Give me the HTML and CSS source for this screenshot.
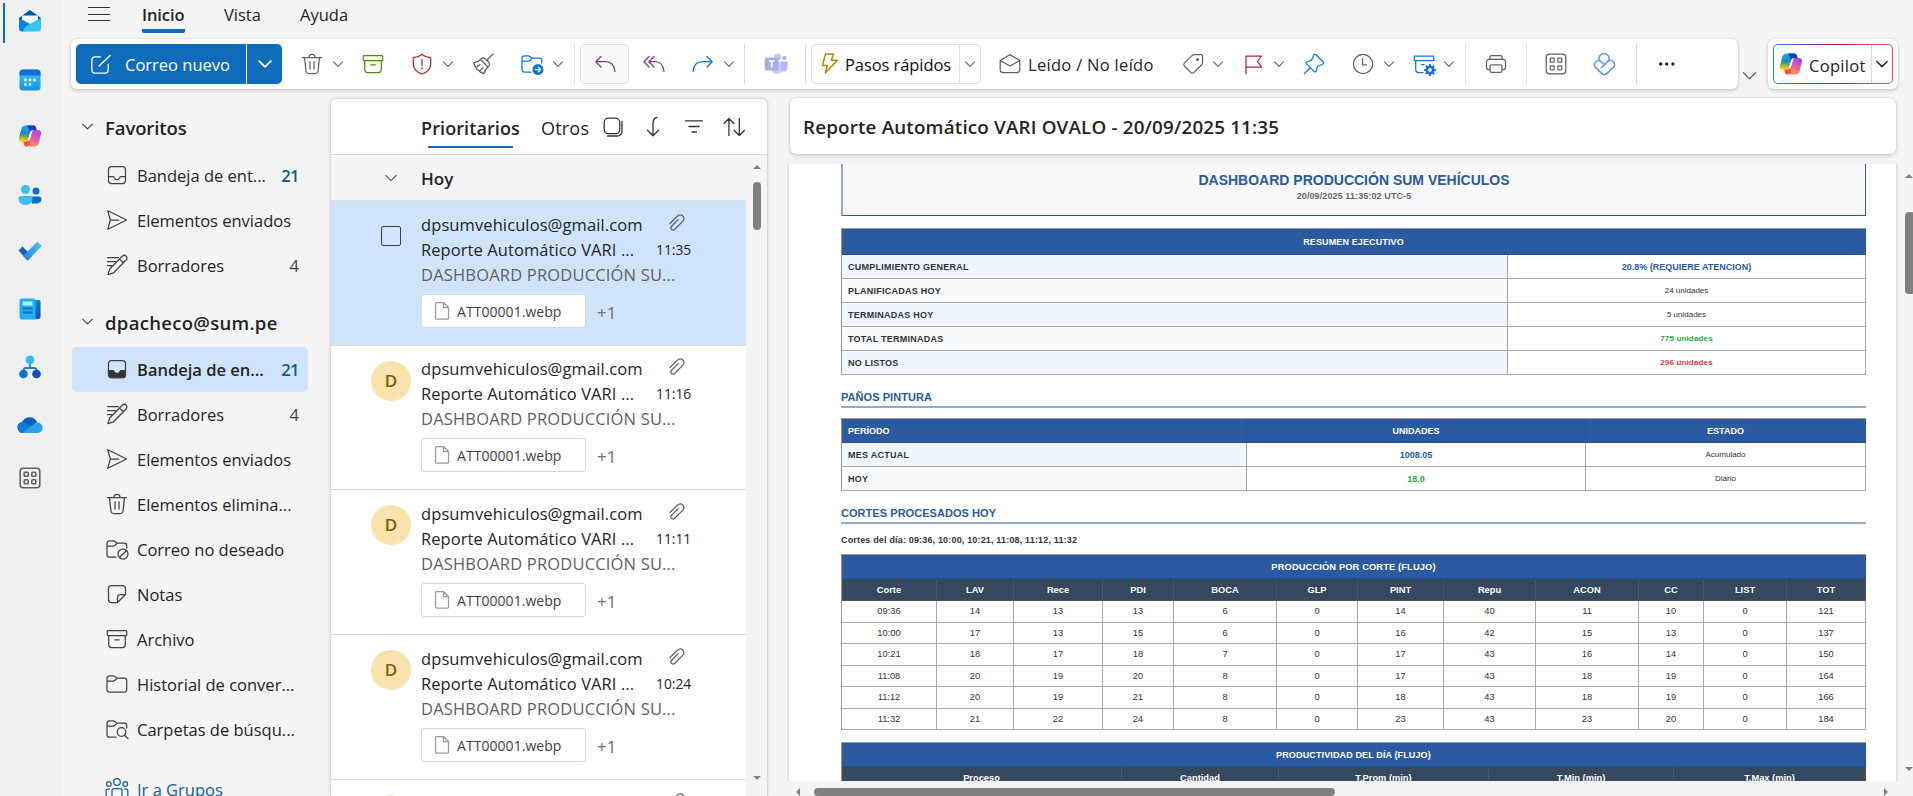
FILE: index.html
```html
<!DOCTYPE html>
<html lang="es">
<head>
<meta charset="utf-8">
<title>Correo - Outlook</title>
<link rel="stylesheet" href="styles.css">
</head>
<body>
<svg class="defs" width="0" height="0" aria-hidden="true">
  <defs>
    <linearGradient id="gA" x1="0.3" y1="0" x2="0.2" y2="1"><stop offset="0.1" stop-color="#1aa4e8"/><stop offset="0.45" stop-color="#1a86c8"/><stop offset="0.65" stop-color="#5cab55"/><stop offset="0.9" stop-color="#f5c518"/></linearGradient>
    <linearGradient id="gB" x1="0.7" y1="0" x2="0.3" y2="1"><stop offset="0" stop-color="#a44ae6"/><stop offset="0.5" stop-color="#e85aa0"/><stop offset="1" stop-color="#ffa05a"/></linearGradient>
    <linearGradient id="gC" x1="0" y1="0" x2="0" y2="1"><stop offset="0" stop-color="#45c8fa"/><stop offset="1" stop-color="#0a93ea"/></linearGradient>
    <linearGradient id="gD" x1="0" y1="0" x2="1" y2="1"><stop offset="0" stop-color="#1a8ae0"/><stop offset="1" stop-color="#0a4fa8"/></linearGradient>
    <linearGradient id="gE" x1="0" y1="1" x2="1" y2="0"><stop offset="0" stop-color="#1b7fe0"/><stop offset="1" stop-color="#55c4f7"/></linearGradient>
  </defs>
  <symbol id="chev" viewBox="0 0 14 14"><path d="M2.500 4.800 7 9.300l4.500-4.500"/></symbol>
  <symbol id="trash" viewBox="0 0 24 24"><path d="M2.500 5.500h19M9 5.300a3 3 0 0 1 6 0M4.500 5.500l1.500 14a2.400 2.400 0 0 0 2.300 2h7.400a2.400 2.400 0 0 0 2.300-2l1.500-14M10 9.500v7.500M14 9.500v7.500"/></symbol>
  <symbol id="archive" viewBox="0 0 24 24"><path d="M3 3.500h18a.7.7 0 0 1 .7.7v3.600a.7.7 0 0 1-.7.7H3a.7.7 0 0 1-.7-.7V4.200a.7.7 0 0 1 .7-.7ZM3.700 8.500v9a3 3 0 0 0 3 3h10.600a3 3 0 0 0 3-3v-9M9.800 12.800h4.400"/></symbol>
  <symbol id="shield" viewBox="0 0 24 24"><path d="M12 2.500c2.500 2 5.300 3 8.700 3.200v6c0 5-3 8.300-8.700 10.300-5.700-2-8.700-5.300-8.700-10.300v-6c3.400-.2 6.200-1.200 8.700-3.200ZM12 7.500v6M12 15.500v1.500"/></symbol>
  <symbol id="broom" viewBox="0 0 24 24"><path d="M22 2l-6.500 6.500M9.500 7.500l7.500 7.500c1.600-1.600 2-3.600.4-5.200l-2.700-2.700c-1.600-1.600-3.600-1.200-5.200.4ZM9.500 7.500C7.800 9.500 5.500 10.500 2.500 10.800c1.500 4.700 5 9 10.300 10.900.8-2.500 2-4.700 4.200-6.700M6 14.500l3-2M9 18.500l3-2.500"/></symbol>
  <symbol id="folder" viewBox="0 0 24 24"><path d="M2 8.500V6.300a2.500 2.500 0 0 1 2.500-2.500h3.700c.7 0 1.200.3 1.700.7l2 1.700h7.300A2.500 2.500 0 0 1 21.700 8.700v9a2.500 2.500 0 0 1-2.500 2.500H4.500A2.500 2.500 0 0 1 2 17.700ZM2 9h6.200c.7 0 1.200-.3 1.700-.7l2-1.700"/></symbol>
  <symbol id="foldercut" viewBox="0 0 24 24"><path d="M21.700 11V8.700a2.500 2.500 0 0 0-2.500-2.500h-7.300l-2-1.700c-.5-.4-1-.7-1.700-.7H4.500A2.500 2.500 0 0 0 2 6.300v11.400a2.500 2.500 0 0 0 2.500 2.500H11M2 9h6.200c.7 0 1.200-.3 1.700-.7l2-1.700"/></symbol>
  <symbol id="apps" viewBox="0 0 24 24"><rect x="2.200" y="2.200" width="19.600" height="19.600" rx="3"/><rect x="6.200" y="6.200" width="4" height="4" rx=".8"/><rect x="13.800" y="6.200" width="4" height="4" rx=".8"/><rect x="6.200" y="13.800" width="4" height="4" rx=".8"/><rect x="13.800" y="13.800" width="4" height="4" rx=".8"/></symbol>
  <symbol id="inbox" viewBox="0 0 24 24"><rect x="3.500" y="3.500" width="17" height="17" rx="3"/><path d="M3.500 13.500h4.700c.5 0 .8.4.9.9.5 1.600 1.500 2.300 2.900 2.300s2.400-.7 2.900-2.300c.1-.5.4-.9.9-.9h4.700"/></symbol>
  <symbol id="send" viewBox="0 0 24 24"><path d="M2.800 2.800 21.600 12 2.800 21.300 5.300 12ZM5.300 12h8.500"/></symbol>
  <symbol id="draft" viewBox="0 0 24 24"><path d="M2.500 4.500h11M2.500 8.500h8M2.500 12.500h4.500M15.500 5l2-2a2.700 2.700 0 0 1 3.800 3.800L8.500 19.800l-5.600 1.800 1.800-5.600ZM14.500 6l3.800 3.800"/></symbol>
  <symbol id="clip" viewBox="0 0 20 20"><path d="M3 10.500 10.300 3.300c1.700-1.700 4-1.800 5.500-.3s1.400 3.700-.2 5.400l-7.800 7.800c-1 1-2.400 1.100-3.300.2s-.9-2.200.1-3.200l6.600-6.600"/></symbol>
  <symbol id="file" viewBox="0 0 20 20"><path d="M5 1.500h6.500l5 5v10.500a1 1 0 0 1-1 1H4.500a1 1 0 0 1-1-1v-14.500a1 1 0 0 1 1-1ZM11.500 1.500v5h5"/></symbol>
  <symbol id="copilot" viewBox="0 0 24 24"><path d="M15.500 1.500c1.400 0 2 .8 2.400 2l.7 2.500h-3.300c-1.800 0-2.700 1-3.200 2.800l-1.700 6c-.6 1.900-1.300 2.900-3.400 2.900H4C1.500 17.700.4 16 1 13.600L3.300 5.100c.7-2.500 2-3.600 4.500-3.600Z" fill="url(#gA)"/><path d="M9 1.500h6.500c1.400 0 2 .8 2.400 2l.7 2.500h-3.300c-1.500 0-2.400.6-3 2Z" fill="#1240b8"/><path d="M8.500 22.500c-1.400 0-2-.8-2.400-2l-.8-2.800h2.200c2 0 2.900-1 3.400-2.800l1.600-5.800c.6-2 1.400-3.100 3.500-3.100h4c2.500 0 3.600 1.700 3 4.100L20.700 19c-.7 2.400-2 3.500-4.500 3.500Z" fill="url(#gB)"/><path d="M8.500 22.500c-1.400 0-2-.8-2.400-2l-.8-2.800h2.200c1.600 0 2.500-.7 3-1.900l2 4.700Z" fill="#f0523a"/><path d="M14.800 6.300c-1.600.2-2.300 1.100-2.800 2.700L9.800 16.800c1.400-.3 2-1.200 2.400-2.600l1.900-6.300c.2-.7.400-1.200.7-1.600Z" fill="#fff"/></symbol>
</svg>

<div class="app">
  <nav class="rail">
    <svg viewBox="0 0 24 24"><path d="M1 9 12 1l11 8v10H1Z" fill="#0b55a8"/><path d="M4 6.500h16v9H4Z" fill="#f2f8fe"/><path d="M1 9l11 6-5 7.500H4a3 3 0 0 1-3-3Z" fill="#0f7fdc"/><path d="M23 9v10.500a3 3 0 0 1-3 3H5c1-4 3-6 7-7.500Z" fill="#35c5f6"/></svg>
    <svg viewBox="0 0 24 24"><rect x="1.500" y="1.500" width="21" height="21" rx="3.500" fill="url(#gC)"/><path d="M1.500 7.500V5A3.500 3.500 0 0 1 5 1.500h14A3.500 3.500 0 0 1 22.500 5v2.500Z" fill="#0f6fd0"/><g fill="#fff"><circle cx="7.500" cy="12" r="1.400"/><circle cx="12" cy="12" r="1.400"/><circle cx="16.500" cy="12" r="1.400"/><circle cx="7.500" cy="16.500" r="1.400"/><circle cx="12" cy="16.500" r="1.400"/></g></svg>
    <svg viewBox="0 0 24 24"><use href="#copilot"/></svg>
    <svg viewBox="0 0 24 24"><circle cx="18" cy="8" r="3.500" fill="#0b6fce"/><path d="M12 13.500h9a2.500 2.500 0 0 1 2.500 2.500c0 3-2.500 4.500-5.500 4.500h-4Z" fill="#0b6fce"/><circle cx="7.500" cy="6.500" r="4.500" fill="#3dbcf8"/><path d="M3 13h9a2.500 2.500 0 0 1 2.500 2.500c0 4-3 6.500-7 6.500s-7-2.500-7-6.500A2.500 2.500 0 0 1 3 13Z" fill="#3dbcf8"/></svg>
    <svg viewBox="0 0 24 24"><path d="M.5 11.500 4.500 7.500l9.500 9.500-4.500 4.500Z" fill="#1b5cc0"/><path d="M5 17 19.500 2.500 23.800 7 9.500 21.500Z" fill="url(#gE)"/></svg>
    <svg viewBox="0 0 24 24"><path d="M15 3h5.500a2 2 0 0 1 2 2v14.500a2.500 2.500 0 0 1-2.500 2.500h-5Z" fill="url(#gD)"/><path d="M3.500 1.500h12a2 2 0 0 1 2 2v17a2 2 0 0 0 2 2H4A2.500 2.500 0 0 1 1.500 20V3.500a2 2 0 0 1 2-2Z" fill="#1fb0f5"/><path d="M4.500 4.500h10v4h-10Z" fill="#b9ecfd"/><path d="M4.500 11.500h10M4.500 15.500h10" stroke="#0a6fc8" stroke-width="1.800"/></svg>
    <svg viewBox="0 0 24 24"><path d="M12 8v5M5.500 17v-1.500a2.500 2.500 0 0 1 2.500-2.500h8a2.500 2.500 0 0 1 2.500 2.500V17" fill="none" stroke="#1a80dc" stroke-width="1.800"/><circle cx="12" cy="4.800" r="4.400" fill="#35bdf8"/><circle cx="5.500" cy="19" r="4.300" fill="#0b6fd8"/><circle cx="18.500" cy="19" r="4.300" fill="#0b50c0"/></svg>
    <svg class="cloud" viewBox="0 0 26 18"><path d="M6 17a5.500 5.500 0 0 1-.8-10.900A8 8 0 0 1 20 6.200L13 13Z" fill="#0a5fb8"/><path d="M6 17A5.600 5.600 0 1 1 9.500 7l9 6Z" fill="#1178d4"/><path d="M5 16.700 18 7.200A5.200 5.200 0 1 1 20 17H6Z" fill="#28a0ea"/></svg>
    <svg class="line rail-apps" viewBox="0 0 24 24"><use href="#apps"/></svg>
  </nav>
  <div class="rail-active"></div>

  <div class="main">
    <header class="tabs">
      <svg class="burger" viewBox="0 0 22 16"><path d="M0 1.500h22M0 8.500h22M0 14.500h22"/></svg>
      <span class="tab tab-on">Inicio</span>
      <span class="tab tab-vista">Vista</span>
      <span class="tab tab-ayuda">Ayuda</span>
    </header>

    <div class="bar">
      <div class="ribbon">
        <div class="new"><span class="new-main"><svg class="line" viewBox="0 0 24 24"><path d="M12 4H6.500A3.500 3.500 0 0 0 3 7.500v10A3.500 3.500 0 0 0 6.500 21h10a3.500 3.500 0 0 0 3.500-3.500V12M10.500 13.500 22 2.500"/></svg><b>Correo nuevo</b></span><span class="new-drop"><svg class="line" viewBox="0 0 14 14"><use href="#chev"/></svg></span></div>
        <svg class="ic line" viewBox="0 0 24 24"><use href="#trash"/></svg>
        <svg class="ch line" viewBox="0 0 14 14"><use href="#chev"/></svg>
        <svg class="ic line green" viewBox="0 0 24 24"><use href="#archive"/></svg>
        <svg class="ic line red" viewBox="0 0 24 24"><use href="#shield"/></svg>
        <svg class="ch line" viewBox="0 0 14 14"><use href="#chev"/></svg>
        <svg class="ic line" viewBox="0 0 24 24"><use href="#broom"/></svg>
        <svg class="ic line blue" viewBox="0 0 24 24"><use href="#foldercut"/><circle cx="18" cy="17.500" r="5.500" fill="#0f78d4" stroke="none"/><path d="M15.300 17.500h5.200M18.500 15.300l2.200 2.200-2.200 2.200" stroke="#fff"/></svg>
        <svg class="ch line" viewBox="0 0 14 14"><use href="#chev"/></svg>
        <i class="sep"></i>
        <span class="reply"><svg class="ic line purple" viewBox="0 0 24 24"><path d="M8 4.500 2.800 9.700 8 15M2.800 9.700h9.500c5.500 0 9 3.500 9.700 9.800"/></svg></span>
        <svg class="ic line purple" viewBox="0 0 24 24"><path d="M7 4.500 2 9.700 7 15M12 4.500 6.800 9.700 12 15M6.800 9.700h6c5 0 8.700 3.500 9.200 9.800"/></svg>
        <svg class="ic line blue" viewBox="0 0 24 24"><path d="M16 4.500l5.200 5.200L16 15M21.200 9.700h-9.500c-5.500 0-9 3.500-9.700 9.800"/></svg>
        <svg class="ch line" viewBox="0 0 14 14"><use href="#chev"/></svg>
        <i class="sep"></i>
        <svg class="ic" viewBox="0 0 24 24"><circle cx="13.500" cy="5" r="3.500" fill="#c3c6ef"/><circle cx="20.300" cy="6" r="2.300" fill="#b4b8ea"/><path d="M7 9.500h12v6.500a6 6 0 0 1-12 0Z" fill="#c9ccf3"/><path d="M17 9.500h6.500v6a4 4 0 0 1-6 3.500Z" fill="#b4b8ea"/><rect x=".8" y="5.500" width="13.500" height="13" rx="1.500" fill="#a9aee0"/><path d="M4.800 9h5.800M7.700 9v6.500" stroke="#fff" stroke-width="1.700"/></svg>
        <i class="sep"></i>
        <div class="quick"><svg class="ic line gold" viewBox="0 0 24 24"><path d="M8.500 2h8l-2.200 6.200h6L8.500 20.800l1.700-7.300H5.500Z" transform="translate(-1 0)"/></svg><span class="quick-label">Pasos rápidos</span><span class="quick-drop"><svg class="ch line" viewBox="0 0 14 14"><use href="#chev"/></svg></span></div>
        <div class="read"><svg class="ic line" viewBox="0 0 24 24"><path d="M2.200 8.500 12 2.600l9.800 5.900v9a3 3 0 0 1-3 3H5.200a3 3 0 0 1-3-3ZM2.500 8.700 12 14l9.500-5.300"/></svg><span>Leído / No leído</span></div>
        <svg class="ic line" viewBox="0 0 24 24"><path d="M13.500 2.700h6.500a1.500 1.500 0 0 1 1.500 1.500v6.500c0 .8-.3 1.400-.8 2l-7.600 7.700a2.300 2.300 0 0 1-3.300 0l-6.200-6.200a2.300 2.300 0 0 1 0-3.300l7.700-7.500c.6-.5 1.300-.7 2.200-.7Z"/><circle cx="16.600" cy="7.600" r="1.500" class="dot"/></svg>
        <svg class="ch line" viewBox="0 0 14 14"><use href="#chev"/></svg>
        <svg class="ic line red" viewBox="0 0 24 24"><path d="M4 21.500V4h15.500l-4 5.500 4 5.700H4"/></svg>
        <svg class="ch line" viewBox="0 0 14 14"><use href="#chev"/></svg>
        <svg class="ic line blue" viewBox="0 0 24 24"><path d="M14 2.800l7.300 7.200c.8.800.3 1.600-.5 2l-5.300 2.500-1.600 4.700c-.3.800-1 1-1.600.4l-8-8c-.6-.6-.4-1.300.4-1.600L9.400 8.400 12 3.200c.4-.8 1.200-1.200 2-.4ZM8.300 15.700l-5.800 5.800"/></svg>
        <svg class="ic line" viewBox="0 0 24 24"><circle cx="12" cy="12" r="9.600"/><path d="M11.500 6.500v6.300h4"/></svg>
        <svg class="ch line" viewBox="0 0 14 14"><use href="#chev"/></svg>
        <svg class="ic line blue" viewBox="0 0 24 24"><path d="M21.700 8.200V4.200H2.300v4.300h19.400ZM3.700 8.500v9a3 3 0 0 0 3 3H11M9.500 12.500H12"/><circle cx="18" cy="18" r="3.200" fill="none" stroke-width="2.600"/><path d="M18 12.800v2M18 21.200v2M12.800 18h2M21.200 18h2M14.400 14.400l1.400 1.400M20.200 20.200l1.400 1.400M14.400 21.600l1.400-1.400M20.200 15.800l1.400-1.400" stroke-width="2"/></svg>
        <svg class="ch line" viewBox="0 0 14 14"><use href="#chev"/></svg>
        <i class="sep"></i>
        <svg class="ic line" viewBox="0 0 24 24"><path d="M6 7.300V5a1.500 1.500 0 0 1 1.500-1.500h9A1.500 1.500 0 0 1 18 5v2.300M6 17.500H4.500a2 2 0 0 1-2-2V10a2.700 2.700 0 0 1 2.700-2.700h13.600a2.700 2.700 0 0 1 2.700 2.700v5.500a2 2 0 0 1-2 2H18M7.500 12.800h9A1.500 1.500 0 0 1 18 14.300v4.500a1.500 1.500 0 0 1-1.500 1.500h-9A1.500 1.500 0 0 1 6 18.800v-4.500a1.500 1.500 0 0 1 1.500-1.500Z"/></svg>
        <i class="sep"></i>
        <svg class="ic line" viewBox="0 0 24 24"><use href="#apps"/></svg>
        <svg class="ic line sky" viewBox="0 0 24 24"><path d="M7.500 8.500a5 5 0 1 1 9 .2M16.500 8.700 9.500 15.500M12 12.300 9.200 9.800a4 4 0 0 0-5.700.2 3.900 3.900 0 0 0 .2 5.600l6 5.800a4 4 0 0 0 5.500 0l6.200-6.200a4 4 0 0 0-5.500-5.800"/></svg>
        <i class="sep"></i>
        <svg class="ic more" viewBox="0 0 24 24"><circle cx="5.700" cy="12" r="1.700"/><circle cx="11.700" cy="12" r="1.700"/><circle cx="17.900" cy="12" r="1.700"/></svg>
      </div>
      <svg class="line expand" viewBox="0 0 14 14"><path d="M1.200 4.300 7 10l5.800-5.700"/></svg>
      <div class="cop-card"><div class="cop"><svg class="cop-logo" viewBox="0 0 24 24"><use href="#copilot"/></svg><span class="cop-label">Copilot</span><span class="cop-drop"><svg class="line" viewBox="0 0 14 14"><use href="#chev"/></svg></span></div></div>
    </div>

    <div class="panes">
      <aside class="folders">
        <div class="group"><svg class="line" viewBox="0 0 14 14"><use href="#chev"/></svg><span>Favoritos</span></div>
        <div class="f"><svg class="line" viewBox="0 0 24 24"><use href="#inbox"/></svg><span>Bandeja de ent...</span><em class="n-on">21</em></div>
        <div class="f"><svg class="line" viewBox="0 0 24 24"><use href="#send"/></svg><span>Elementos enviados</span></div>
        <div class="f"><svg class="line" viewBox="0 0 24 24"><use href="#draft"/></svg><span>Borradores</span><em>4</em></div>
        <div class="group group2"><svg class="line" viewBox="0 0 14 14"><use href="#chev"/></svg><span>dpacheco@sum.pe</span></div>
        <div class="f f-on"><svg class="line" viewBox="0 0 24 24"><path d="M3.500 13.500h5c.5 2.200 1.600 3.200 3.500 3.200s3-1 3.500-3.200h5V18a2.500 2.500 0 0 1-2.500 2.500H6A2.500 2.500 0 0 1 3.500 18Z" fill="#333"/><rect x="3.500" y="3.500" width="17" height="17" rx="3"/></svg><span>Bandeja de en...</span><em class="n-on">21</em></div>
        <div class="f"><svg class="line" viewBox="0 0 24 24"><use href="#draft"/></svg><span>Borradores</span><em>4</em></div>
        <div class="f"><svg class="line" viewBox="0 0 24 24"><use href="#send"/></svg><span>Elementos enviados</span></div>
        <div class="f"><svg class="line" viewBox="0 0 24 24"><use href="#trash"/></svg><span>Elementos elimina...</span></div>
        <div class="f"><svg class="line" viewBox="0 0 24 24"><use href="#foldercut"/><circle cx="18" cy="17" r="5"/><path d="M14.500 20.500l7-7"/></svg><span>Correo no deseado</span></div>
        <div class="f"><svg class="line" viewBox="0 0 24 24"><path d="M12.500 20.500H6.500a3 3 0 0 1-3-3v-11a3 3 0 0 1 3-3h11a3 3 0 0 1 3 3v6ZM12.500 20.500v-5a3 3 0 0 1 3-3h5"/></svg><span>Notas</span></div>
        <div class="f"><svg class="line" viewBox="0 0 24 24"><use href="#archive"/></svg><span>Archivo</span></div>
        <div class="f"><svg class="line" viewBox="0 0 24 24"><use href="#folder"/></svg><span>Historial de conver...</span></div>
        <div class="f"><svg class="line" viewBox="0 0 24 24"><use href="#foldercut"/><circle cx="16.500" cy="15" r="4.300"/><path d="M19.600 18.200l3.400 3.400"/></svg><span>Carpetas de búsqu...</span></div>
        <div class="f f-link"><svg class="line" viewBox="0 0 24 24"><circle cx="12" cy="5" r="3.300"/><circle cx="3.800" cy="7" r="2.300"/><circle cx="20.200" cy="7" r="2.300"/><path d="M7 21v-7.500a2 2 0 0 1 2-2h6a2 2 0 0 1 2 2V21M4.500 12H2.700a1.500 1.500 0 0 0-1.500 1.500V19M19.500 12h1.800a1.500 1.500 0 0 1 1.500 1.500V19"/></svg><span>Ir a Grupos</span></div>
      </aside>

      <section class="list">
        <div class="list-head">
          <span class="focus">Prioritarios</span><span class="other">Otros</span>
          <svg class="line" viewBox="0 0 24 24"><rect x="3.200" y="3.200" width="15.500" height="15.500" rx="4"/><path d="M6.500 21h9.700a4.800 4.800 0 0 0 4.800-4.800V6.500"/></svg>
          <svg class="line" viewBox="0 0 24 24"><path d="M6.500 15.200 12 20.800l5.500-5.600M12 20.800V8.500c0-3 1.500-5.500 4-6"/></svg>
          <svg class="line" viewBox="0 0 24 24"><path d="M3.500 5.800h17M7 11.500h10M10 17h4.500"/></svg>
          <svg class="line" viewBox="0 0 24 24"><path d="M2 8.500 6.900 3.500l5 5M6.900 3.500v17M12.300 15.500l5 5 5-5M17.300 20.500v-17"/></svg>
        </div>
        <div class="list-body">
          <div class="rows">
            <div class="day"><svg class="line" viewBox="0 0 14 14"><use href="#chev"/></svg><span>Hoy</span></div>
            <article class="m m-on"><span class="box"></span><div class="t"><div class="l1"><span>dpsumvehiculos@gmail.com</span><svg class="line" viewBox="0 0 20 20"><use href="#clip"/></svg></div><div class="l2"><span>Reporte Automático VARI ...</span><time>11:35</time></div><div class="l3">DASHBOARD PRODUCCIÓN SU...</div><div class="l4"><span class="chip"><svg class="line" viewBox="0 0 20 20"><use href="#file"/></svg>ATT00001.webp</span><span class="plus">+1</span></div></div></article>
            <article class="m m-2"><span class="av">D</span><div class="t"><div class="l1"><span>dpsumvehiculos@gmail.com</span><svg class="line" viewBox="0 0 20 20"><use href="#clip"/></svg></div><div class="l2"><span>Reporte Automático VARI ...</span><time>11:16</time></div><div class="l3">DASHBOARD PRODUCCIÓN SU...</div><div class="l4"><span class="chip"><svg class="line" viewBox="0 0 20 20"><use href="#file"/></svg>ATT00001.webp</span><span class="plus">+1</span></div></div></article>
            <article class="m"><span class="av">D</span><div class="t"><div class="l1"><span>dpsumvehiculos@gmail.com</span><svg class="line" viewBox="0 0 20 20"><use href="#clip"/></svg></div><div class="l2"><span>Reporte Automático VARI ...</span><time>11:11</time></div><div class="l3">DASHBOARD PRODUCCIÓN SU...</div><div class="l4"><span class="chip"><svg class="line" viewBox="0 0 20 20"><use href="#file"/></svg>ATT00001.webp</span><span class="plus">+1</span></div></div></article>
            <article class="m"><span class="av">D</span><div class="t"><div class="l1"><span>dpsumvehiculos@gmail.com</span><svg class="line" viewBox="0 0 20 20"><use href="#clip"/></svg></div><div class="l2"><span>Reporte Automático VARI ...</span><time>10:24</time></div><div class="l3">DASHBOARD PRODUCCIÓN SU...</div><div class="l4"><span class="chip"><svg class="line" viewBox="0 0 20 20"><use href="#file"/></svg>ATT00001.webp</span><span class="plus">+1</span></div></div></article>
            <article class="m"><span class="av"></span><div class="t"><div class="l1"><span></span><svg class="line" viewBox="0 0 20 20"><use href="#clip"/></svg></div></div></article>
          </div>
          <div class="vbar"><i class="up"></i><i class="thumb"></i><i class="down"></i></div>
        </div>
      </section>

      <section class="reader">
        <h1 class="subject">Reporte Automático VARI OVALO - 20/09/2025 11:35</h1>
        <div class="view">
          <div class="doc">
            <div class="doc-head"><div class="doc-title">DASHBOARD PRODUCCIÓN SUM VEHÍCULOS</div><div class="doc-date">20/09/2025 11:35:02 UTC-5</div></div>
            <div class="g g1">
              <div class="th full">RESUMEN EJECUTIVO</div>
              <div class="k">CUMPLIMIENTO GENERAL</div><div class="v blue-t">20.8% (REQUIERE ATENCION)</div>
              <div class="k alt">PLANIFICADAS HOY</div><div class="s">24 unidades</div>
              <div class="k">TERMINADAS HOY</div><div class="s">5 unidades</div>
              <div class="k alt">TOTAL TERMINADAS</div><div class="s green-t">775 unidades</div>
              <div class="k">NO LISTOS</div><div class="s red-t">296 unidades</div>
            </div>
            <h2 class="h-a">PAÑOS PINTURA</h2>
            <div class="g g2">
              <div class="th left">PERÍODO</div><div class="th">UNIDADES</div><div class="th">ESTADO</div>
              <div class="k">MES ACTUAL</div><div class="v blue-t">1008.05</div><div class="s">Acumulado</div>
              <div class="k alt">HOY</div><div class="v green-t">18.0</div><div class="s">Diario</div>
            </div>
            <h2 class="h-b">CORTES PROCESADOS HOY</h2>
            <p class="cuts">Cortes del día: 09:36, 10:00, 10:21, 11:08, 11:12, 11:32</p>
            <div class="g g3">
              <div class="th full">PRODUCCIÓN POR CORTE (FLUJO)</div>
              <div class="hd">Corte</div><div class="hd">LAV</div><div class="hd">Rece</div><div class="hd">PDI</div><div class="hd">BOCA</div><div class="hd">GLP</div><div class="hd">PINT</div><div class="hd">Repu</div><div class="hd">ACON</div><div class="hd">CC</div><div class="hd">LIST</div><div class="hd">TOT</div>
              <div>09:36</div><div>14</div><div>13</div><div>13</div><div>6</div><div>0</div><div>14</div><div>40</div><div>11</div><div>10</div><div>0</div><div>121</div>
              <div>10:00</div><div>17</div><div>13</div><div>15</div><div>6</div><div>0</div><div>16</div><div>42</div><div>15</div><div>13</div><div>0</div><div>137</div>
              <div>10:21</div><div>18</div><div>17</div><div>18</div><div>7</div><div>0</div><div>17</div><div>43</div><div>16</div><div>14</div><div>0</div><div>150</div>
              <div>11:08</div><div>20</div><div>19</div><div>20</div><div>8</div><div>0</div><div>17</div><div>43</div><div>18</div><div>19</div><div>0</div><div>164</div>
              <div>11:12</div><div>20</div><div>19</div><div>21</div><div>8</div><div>0</div><div>18</div><div>43</div><div>18</div><div>19</div><div>0</div><div>166</div>
              <div>11:32</div><div>21</div><div>22</div><div>24</div><div>8</div><div>0</div><div>23</div><div>43</div><div>23</div><div>20</div><div>0</div><div>184</div>
            </div>
            <div class="g g4">
              <div class="th full">PRODUCTIVIDAD DEL DÍA (FLUJO)</div>
              <div class="hd">Proceso</div><div class="hd">Cantidad</div><div class="hd">T.Prom (min)</div><div class="hd">T.Min (min)</div><div class="hd">T.Max (min)</div>
            </div>
          </div>
          <div class="vbar2"><i class="up"></i><i class="thumb"></i><i class="down"></i></div>
        </div>
        <div class="hbar"><i class="lf"></i><i class="thumb"></i><i class="rt"></i></div>
      </section>
    </div>
  </div>
</div>
</body>
</html>
```
FILE: styles.css
```css
* { box-sizing: border-box; }
html, body { margin: 0; height: 100%; overflow: hidden; }
body { background: #f4f4f4; color: #242424; font-family: "Open Sans", "Noto Sans", sans-serif; font-size: 16.5px; }
svg { display: block; flex: none; }
.defs { position: absolute; }
.line { fill: none; stroke: #616161; stroke-width: 1.25; stroke-linecap: round; stroke-linejoin: round; }
.green { stroke: #4f8a10; }
.red { stroke: #b3262e; }
.blue { stroke: #0f78d4; }
.purple { stroke: #8e2a9e; }
.gold { stroke: #b8860b; stroke-width: 1.5; }
.sky { stroke: #5b92f5; stroke-width: 1.5; }
.dot { fill: #616161; stroke: none; }
.more { fill: #242424; }

.app { display: flex; height: 796px; width: 1913px; position: relative; }
.rail { width: 61px; padding-right: 1px; flex: none; background: #efefef; display: grid; grid-template-rows: 42px 75px 38px 80px 32px 84px 32px 84px 22px; justify-items: center; align-items: center; align-content: start; }
.rail svg { width: 24px; height: 24px; }
.rail .cloud { width: 26px; height: 18px; }
.rail .rail-apps { stroke-width: 1.6; }
.rail-active { position: absolute; left: 3px; top: 3px; width: 2px; height: 40px; background: #0f6cbd; }
.main { flex: 1; min-width: 0; display: flex; flex-direction: column; }

.tabs { height: 39px; display: flex; align-items: flex-start; padding-left: 27px; flex: none; }
.burger { width: 22px; height: 16px; margin-top: 6px; margin-right: 32px; fill: none; stroke: #333; stroke-width: 1.1; }
.tab { height: 33px; line-height: 30px; white-space: nowrap; }
.tab-on { width: 43px; font-weight: 600; letter-spacing: -.1px; border-bottom: 4px solid #0f6cbd; border-radius: 2px; }
.tab-vista { margin-left: 39px; width: 76px; }

.bar { display: flex; padding-left: 10px; height: 50px; flex: none; }
.ribbon, .cop-card { background: #fff; border-radius: 6px; box-shadow: 0 0 2px rgba(0,0,0,.16), 0 2px 4px rgba(0,0,0,.14); }
.ribbon { width: 1667px; flex: none; padding-left: 5px; display: grid; align-items: center; justify-items: start; grid-template-columns: 224px 31px 30px 49px 31px 30px 49px 31px 23px 6px 62px 49px 31px 22px 20px 41px 6px 187px 183px 30px 31px 30px 30px 49px 31px 30px 30px 23px 19px 42px 18px 48px 44px 19px 24px; }
.ic { width: 24px; height: 24px; }
.ch { width: 14px; height: 14px; stroke-width: 1.05; }
.sep { width: 1px; height: 40px; background: #dcdcdc; }
.new { width: 206px; height: 40px; border-radius: 5px; background: #0f6cbd; color: #fff; display: flex; }
.new .line { stroke: #fff; stroke-width: 1.4; }
.new-main { width: 171px; border-right: 1px solid #fff; display: flex; align-items: center; padding-left: 13px; }
.new-main svg { width: 23px; height: 23px; margin-right: 13px; }
.new-main b { font-weight: 400; white-space: nowrap; }
.new-drop { flex: 1; display: flex; align-items: center; justify-content: center; }
.new-drop svg { width: 18px; height: 18px; }
.reply { width: 49px; height: 40px; border: 1px solid #e0e0e0; border-radius: 5px; background: #fafafa; display: flex; align-items: center; justify-content: center; }
.quick { width: 170px; height: 40px; border: 1px solid #e0e0e0; border-radius: 5px; display: flex; align-items: center; padding-left: 6px; color: #111; }
.quick-label { width: 114px; margin-left: 3px; letter-spacing: -.08px; white-space: nowrap; }
.quick-drop { border-left: 1px solid #e0e0e0; height: 38px; width: 21px; display: flex; align-items: center; justify-content: center; }
.read { display: flex; align-items: center; gap: 6px; letter-spacing: .3px; white-space: nowrap; }
.expand { width: 15px; height: 15px; margin: 29px 0 0 4px; }
.cop-card { width: 130px; margin-left: 11px; padding: 5px; }
.cop { height: 40px; border: 1px solid transparent; border-radius: 5px; background: linear-gradient(#fff, #fff) padding-box, linear-gradient(90deg, #1a8fe0, #7a3fae 30%, #c8128a 50%, #f0503c) border-box; display: flex; align-items: center; padding-left: 5px; }
.cop-logo { width: 24px; height: 24px; }
.cop-label { width: 62px; margin-left: 6px; padding-top: 2px; letter-spacing: .3px; }
.cop-drop { flex: 1; height: 38px; border-left: 1px solid #d6d6d6; display: flex; align-items: center; justify-content: center; }
.cop-drop svg { width: 16px; height: 16px; stroke: #242424; stroke-width: 1.3; }

.panes { display: flex; margin-top: 9px; height: 698px; }
.folders { width: 269px; flex: none; padding-left: 11px; overflow: hidden; }
.folders .line { stroke: #424242; }
.group { display: flex; align-items: flex-start; height: 55px; padding: 18px 0 0 8px; font-weight: 600; font-size: 18.5px; line-height: 24px; letter-spacing: -.1px; }
.group svg { width: 15px; height: 15px; margin: 3px 10px 0 0; stroke-width: 1; }
.group2 { height: 59px; padding-top: 23px; letter-spacing: .3px; }
.f { height: 45px; width: 236px; display: flex; align-items: center; padding: 0 9px 1px 33px; white-space: nowrap; }
.f svg { width: 24px; height: 24px; margin-right: 8px; }
.f em { font-style: normal; margin-left: auto; color: #424242; }
.f .n-on { font-weight: 600; color: #115a94; letter-spacing: -.5px; }
.f-on { background: #cfe4fa; border-radius: 5px; font-weight: 600; }
.f-link { margin-top: 15px; color: #115ea3; }
.f-link svg.line { stroke: #115ea3; }

.list { width: 438px; flex: none; border: 1px solid #d9d9d9; border-bottom: 0; border-radius: 6px 6px 0 0; background: #fff; box-shadow: 0 0 3px rgba(0,0,0,.12); display: flex; flex-direction: column; overflow: hidden; }
.list-head { height: 56px; border-bottom: 1px solid #d9d9d9; flex: none; display: flex; align-items: flex-start; padding: 16px 0 0 90px; line-height: 26px; font-size: 18px; }
.list-head svg { width: 24px; height: 24px; margin-right: 16.300px; }
.list-head .line { stroke: #333; stroke-width: 1.3; }
.focus { width: 120px; font-weight: 600; letter-spacing: .1px; height: 33px; background: linear-gradient(#0f6cbd, #0f6cbd) 7px 100% / 85px 2px no-repeat; }
.other { width: 60px; letter-spacing: .2px; }
.list-body { flex: 1; display: flex; min-height: 0; }
.rows { width: 415px; overflow: hidden; }
.day { height: 46px; background: #f4f4f4; border-bottom: 1px solid #dedede; display: flex; align-items: center; padding: 1px 0 0 52px; font-weight: 600; font-size: 17px; }
.day svg { width: 16px; height: 16px; margin-right: 22px; stroke-width: 1; }
.m { height: 145px; border-bottom: 1px solid #d9d9d9; display: flex; padding-left: 40px; }
.m-2 { height: 144px; }
.m-2 .t { padding-top: 10px; }
.m-on { background: #cfe4fa; }
.box { width: 20px; height: 20px; margin: 25px 20px 0 10px; border: 1px solid #424242; border-radius: 2px; }
.av { width: 40px; height: 40px; margin: 15px 10px 0 0; border-radius: 50%; background: #f9e2ae; color: #835b00; font-weight: 600; font-size: 17px; line-height: 40px; text-align: center; }
.t { padding-top: 11px; width: 290px; line-height: 25px; white-space: nowrap; }
.l1, .l2 { display: flex; height: 25px; }
.l1 span { width: 246px; letter-spacing: .1px; }
.l1 svg { width: 20px; height: 20px; margin-top: 1px; }
.l2 span { width: 236px; letter-spacing: .08px; }
.l2 time { font-size: 13.8px; margin-left: -1px; }
.l3 { height: 32px; color: #616161; letter-spacing: .18px; }
.l4 { display: flex; align-items: center; }
.chip { width: 165px; height: 34px; border: 1px solid #d9d9d9; border-radius: 3px; background: #fff; display: flex; align-items: center; padding-left: 10px; font-size: 14px; letter-spacing: .05px; color: #424242; }
.chip svg { width: 20px; height: 20px; margin-right: 5px; stroke: #9a9a9a; }
.plus { margin-left: 11px; padding-top: 2px; font-size: 17px; color: #707070; }
i { display: block; }
.vbar { flex: 1; background: #f4f4f4; display: flex; flex-direction: column; align-items: center; padding-top: 10px; }
.up { border: 4px solid transparent; border-top: 0; border-bottom-color: #7f7f7f; }
.down { border: 4px solid transparent; border-bottom: 0; border-top-color: #7f7f7f; }
.vbar .thumb { width: 8px; height: 48px; border-radius: 4px; background: #808080; margin: 13px 0 546px; }

.reader { width: 1145px; padding-left: 19px; flex: none; }
.subject { margin: 0 0 0 3px; width: 1106px; height: 56px; background: #fff; border-radius: 6px; box-shadow: 0 0 2px rgba(0,0,0,.2), 0 2px 4px rgba(0,0,0,.14); padding-left: 13px; font-size: 18.8px; letter-spacing: .18px; font-weight: 600; line-height: 59px; white-space: nowrap; }
.view { display: flex; margin-top: 10px; height: 617px; overflow: hidden; }
.doc { width: 1111px; flex: none; background: #fff; border: solid #e1e1e1; border-width: 0 2px; padding: 0 30px 0 52px; font-family: "Liberation Sans", Arial, sans-serif; font-size: 9px; color: #333; }
.doc-head { height: 52px; border: 1px solid #2b5aa0; border-top: 0; border-left: 2px solid #8faad3; background: #f8f9fb; text-align: center; font-weight: 700; padding-top: 8px; }
.doc-title { font-size: 14px; line-height: 16px; color: #2b5aa0; }
.doc-date { font-size: 9px; line-height: 17px; color: #666; letter-spacing: .1px; }
.g { display: grid; border: 1px solid #999; border-width: 1px 0 0 1px; width: 1025px; }
.g > div { border: solid #aaa; border-width: 0 1px 1px 0; display: flex; align-items: center; justify-content: center; white-space: nowrap; }
.g > .full { grid-column: 1 / -1; letter-spacing: .13px; }
.g > .th { background: #2b5aa0; color: #fff; font-weight: 700; border-color: #24508f; }
.g > .hd { background: #34495e; color: #fff; font-weight: 700; border-color: #4a5560; font-size: 9.3px; }
.g > .left, .g > .k { justify-content: flex-start; padding-left: 6px; }
.g > .k { background: #eef6ff; font-weight: 700; letter-spacing: .25px; }
.g > .alt { background: #f8f9fa; }
.g > .v { font-weight: 700; }
.g > .s { font-size: 8px; }
.g > .blue-t { color: #2b5aa0; }
.g > .green-t { color: #28a745; font-weight: 700; }
.g > .red-t { color: #dc3545; font-weight: 700; }
.g > .s.green-t, .g > .s.red-t { letter-spacing: .15px; }
.g1 { margin-top: 12px; grid-template: 26px repeat(5, 24px) / 666px 358px; }
.g2 { margin-top: 10px; grid-template: repeat(3, 24px) / 405px 339px 280px; }
.g3 { margin-top: 5px; grid-template: 24px 22px repeat(6, 21.5px) / 95px 77px 89px 71px 103px 81px 86px 92px 103px 65px 83px 79px; font-size: 9.3px; }
.g4 { margin-top: 12px; grid-template: 24px 22px / 280px 157px 210px 185px 192px; }
.doc h2 { margin: 0; font-size: 11px; font-weight: 700; color: #2b5aa0; border-bottom: 2px solid #8faad3; line-height: 13px; width: 1025px; }
.doc .h-a { margin-top: 16px; height: 17px; letter-spacing: .05px; line-height: 12px; }
.doc .h-b { margin-top: 15px; height: 18px; padding-top: 1px; letter-spacing: .05px; }
.cuts { margin: 10px 0 0; height: 15px; line-height: 12px; font-size: 9px; font-weight: 700; letter-spacing: .17px; }
.vbar2 { width: 15px; padding-left: 7px; padding-top: 10px; overflow: hidden; }
.vbar2 .thumb { width: 10px; height: 82px; border-radius: 4px; background: #808080; margin: 34px 0 473px; }
.hbar { display: flex; align-items: center; height: 15px; padding: 7px 0 0 9px; }
.lf { border: 4px solid transparent; border-left: 0; border-right-color: #7f7f7f; }
.rt { border: 4px solid transparent; border-right: 0; border-left-color: #7f7f7f; }
.hbar .thumb { width: 521px; height: 8px; border-radius: 4px; background: #808080; margin: 0 549px 0 14px; }
```
